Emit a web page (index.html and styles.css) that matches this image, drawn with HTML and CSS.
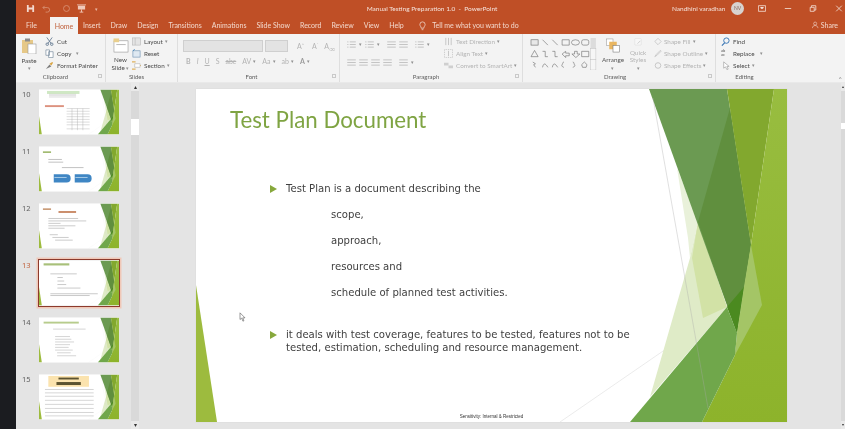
FILE: index.html
```html
<!DOCTYPE html>
<html lang="en">
<head>
    <meta charset="UTF-8">
    <title>Manual Testing Preparation 1.0 - PowerPoint</title>
    <link rel="stylesheet" href="styles.css">
</head>
<body>
    <svg class="defs" width="0" height="0">
        <defs>
            <symbol id="deco" viewBox="196 89 591 333" preserveAspectRatio="none">
                <linearGradient id="bright" x1="0" y1="0" x2="0" y2="1">
                    <stop offset="0" stop-color="#98bd40"/>
                    <stop offset="1" stop-color="#8db32b"/>
                </linearGradient>
                <polygon points="196,285 217,422 196,422" fill="#9dbb3e"/>
                <line x1="560" y1="422" x2="727" y2="307" stroke="#e6e6e6" stroke-width="0.8"/>
                <polygon points="677,168 698,222 690,258 688,238" fill="#e9f1da"/>
                <polygon points="698,222 727,307 650,397 690,258" fill="#dfebc7"/>
                <polygon points="698,222 727,307 703,318 692,258" fill="#d2e2a6"/>
                <polygon points="649,89 727,89 751,245 737,333" fill="#6b9a52"/>
                <polygon points="730,108 751,245 737,333 698,222" fill="#608f3e"/>
                <polygon points="727,307 744,287 737,333" fill="#4b8a20"/>
                <polygon points="727,89 774,89 751,245" fill="#82a82e"/>
                <polygon points="774,89 787,89 787,422 702,422 735,355 751,245" fill="url(#bright)"/>
                <polygon points="751,245 762,305 735,355 737,333 744,287" fill="#a4c566"/>
                <polygon points="727,307 737,333 735,355 702,422 630,422" fill="#70a74b"/>
                <line x1="653" y1="98" x2="708" y2="408" stroke="#a9a9a9" stroke-width="0.6" stroke-opacity="0.6"/>
            </symbol>
            <symbol id="lines" viewBox="0 0 10 8">
                <path d="M0 1h10M0 4h10M0 7h10" stroke="currentColor" stroke-width="1"/>
            </symbol>
            <symbol id="bullets" viewBox="0 0 10 8">
                <path d="M0 1h1.500M3 1h7M0 4h1.500M3 4h7M0 7h1.500M3 7h7" stroke="currentColor" stroke-width="1"/>
            </symbol>
        </defs>
    </svg>

    <div class="strip"></div>

    <div class="app">
        <header class="titlebar">
            <div class="qat">
                <svg class="qat-save" viewBox="0 0 10 10"><path d="M1 1h7l1 1v7H1z" fill="#f3d9cf"/><path d="M3 1h4v3H3zM3 6h4v3H3z" fill="#bf4f26"/></svg>
                <svg class="qat-undo" viewBox="0 0 10 10"><path d="M3 2L1 4l2 2M1 4h5a2.500 2.500 0 0 1 0 5H4" fill="none" stroke="#d88f72" stroke-width="1"/></svg>
                <svg class="qat-redo" viewBox="0 0 10 10"><circle cx="5" cy="5" r="3.300" fill="none" stroke="#d88f72" stroke-width="1"/></svg>
                <svg class="qat-show" viewBox="0 0 12 10"><path d="M1 0.500h10v1H1zM2 2h8v4H2z" fill="#f0c9ba"/><path d="M6 6v3M4 9h4" stroke="#f0c9ba"/></svg>
                <span class="qat-more">▾</span>
            </div>
            <div class="doc-title">Manual Testing Preparation 1.0 &nbsp;-&nbsp; PowerPoint</div>
            <div class="winbar">
                <span class="user">Nandhini varadhan</span>
                <span class="avatar">NV</span>
                <svg class="win-icon" viewBox="0 0 10 8"><path d="M0.500 0.500h9v7h-9z" fill="none" stroke="#f5e3db"/><path d="M3 2h4v1.500L5 5 3 3.500z" fill="#f5e3db"/></svg>
                <svg class="win-icon" viewBox="0 0 10 8"><path d="M1 4h8" stroke="#f5e3db"/></svg>
                <svg class="win-icon" viewBox="0 0 10 8"><path d="M1.500 2.500h5v5h-5zM3 2.500V0.500h5.500V6H6.500" fill="none" stroke="#f5e3db"/></svg>
                <svg class="win-icon" viewBox="0 0 10 8"><path d="M1.500 0.500l7 7M8.500 0.500l-7 7" stroke="#f5e3db"/></svg>
            </div>
        </header>

        <nav class="tabs">
            <span class="tab file">File</span>
            <span class="tab active">Home</span>
            <span class="tab">Insert</span>
            <span class="tab">Draw</span>
            <span class="tab">Design</span>
            <span class="tab">Transitions</span>
            <span class="tab">Animations</span>
            <span class="tab">Slide Show</span>
            <span class="tab">Record</span>
            <span class="tab">Review</span>
            <span class="tab">View</span>
            <span class="tab">Help</span>
            <svg class="bulb" viewBox="0 0 8 11"><path d="M2.500 8C2.500 6 1 5.500 1 3.800a3 3 0 0 1 6 0C7 5.500 5.500 6 5.500 8zM3 9.700h2" fill="none" stroke="#f7e6de" stroke-width="0.800"/></svg>
            <span class="tell">Tell me what you want to do</span>
            <span class="share">
                <svg viewBox="0 0 10 10"><circle cx="4.500" cy="3" r="2.200" fill="none" stroke="#f5e3db" stroke-width="0.800"/><path d="M0.500 9.500c0-5 8-5 8 0" fill="none" stroke="#f5e3db" stroke-width="0.800"/></svg>
                Share
            </span>
        </nav>

        <section class="ribbon">
            <div class="group g-clipboard">
                <div class="group-body">
                    <div class="big">
                        <svg class="big-icon" viewBox="0 0 16 16"><rect x="1" y="2" width="11" height="13" fill="#e6c887"/><rect x="4" y="0.500" width="5" height="3" fill="#8d8d8d"/><rect x="7" y="6" width="8" height="10" fill="#fff" stroke="#9a9a9a" stroke-width="0.600"/></svg>
                        <span>Paste</span>
                        <span class="caret">▾</span>
                    </div>
                    <div class="rows">
                        <div class="row"><svg class="ic" viewBox="0 0 10 10"><path d="M2 0.500l5 7M8 0.500l-5 7" stroke="#6a7f95" fill="none"/><circle cx="2.500" cy="8" r="1.400" fill="none" stroke="#6a7f95"/><circle cx="7.500" cy="8" r="1.400" fill="none" stroke="#6a7f95"/></svg>Cut</div>
                        <div class="row"><svg class="ic" viewBox="0 0 10 10"><path d="M1 1h4v6H1zM4 3h5v6.500H4z" fill="#fff" stroke="#6f8597" stroke-width="0.700"/></svg>Copy &nbsp;<span class="caret">▾</span></div>
                        <div class="row"><svg class="ic" viewBox="0 0 10 10"><path d="M5 3l3-2 1 1-2 3z" fill="#d9a441"/><path d="M1 9l4-5 2 2z" fill="#7d7d7d"/></svg>Format Painter</div>
                    </div>
                </div>
                <div class="group-label">Clipboard<i class="launcher"></i></div>
            </div>

            <div class="group g-slides">
                <div class="group-body">
                    <div class="big">
                        <svg class="big-icon" viewBox="0 0 16 16"><rect x="0.500" y="3" width="15" height="12" fill="#fff" stroke="#8f8f8f" stroke-width="0.600"/><rect x="0" y="0.500" width="6" height="4" fill="#e9cf8e"/><path d="M3 7h10" stroke="#b5b5b5"/></svg>
                        <span class="two-line">New<br>Slide <span class="caret">▾</span></span>
                    </div>
                    <div class="rows">
                        <div class="row"><svg class="ic" viewBox="0 0 10 10"><rect x="0.500" y="1" width="9" height="8" fill="#e4e4e4" stroke="#b2b2b2" stroke-width="0.600"/><path d="M3.500 1v8" stroke="#b2b2b2" stroke-width="0.600"/></svg>Layout <span class="caret">▾</span></div>
                        <div class="row"><svg class="ic" viewBox="0 0 10 10"><rect x="1" y="2" width="8" height="7" fill="#dfe9f2" stroke="#6f93b3" stroke-width="0.700"/><path d="M1 2l2-1.500" stroke="#3f7fb5"/></svg>Reset</div>
                        <div class="row"><svg class="ic" viewBox="0 0 10 10"><path d="M0 1h4M6 5h4M0 9h4" stroke="#e0b35f" stroke-width="1.200"/><path d="M3 3h6v4H3z" fill="#fff" stroke="#a9a9a9" stroke-width="0.600"/></svg>Section <span class="caret">▾</span></div>
                    </div>
                </div>
                <div class="group-label">Slides</div>
            </div>

            <div class="group g-font off">
                <div class="group-body stacked">
                    <div class="line">
                        <span class="select s-name"></span>
                        <span class="select s-size"></span>
                        <span class="glyph g1">A<sup>^</sup></span>
                        <span class="glyph g1">A<sup>ˇ</sup></span>
                        <span class="glyph g1">A<sub>⌫</sub></span>
                    </div>
                    <div class="line font-marks">
                        <b>B</b><i>I</i><u>U</u><span>S</span><s>abc</s><span>AV</span><span class="caret">▾</span><span>Aa</span><span class="caret">▾</span><span class="mark-pen">ab</span><span class="caret">▾</span><span class="mark-a">A</span><span class="caret">▾</span>
                    </div>
                </div>
                <div class="group-label">Font<i class="launcher"></i></div>
            </div>

            <div class="group g-para off">
                <div class="group-body">
                    <div class="para-icons">
                        <div class="line">
                            <svg class="pi" viewBox="0 0 10 8"><use href="#bullets"/></svg><span class="caret">▾</span>
                            <svg class="pi" viewBox="0 0 10 8"><use href="#bullets"/></svg><span class="caret">▾</span>
                            <svg class="pi sep" viewBox="0 0 10 8"><use href="#lines"/></svg>
                            <svg class="pi" viewBox="0 0 10 8"><use href="#lines"/></svg>
                            <svg class="pi sep" viewBox="0 0 10 8"><use href="#bullets"/></svg><span class="caret">▾</span>
                        </div>
                        <div class="line">
                            <svg class="pi" viewBox="0 0 10 8"><use href="#lines"/></svg>
                            <svg class="pi" viewBox="0 0 10 8"><use href="#lines"/></svg>
                            <svg class="pi" viewBox="0 0 10 8"><use href="#lines"/></svg>
                            <svg class="pi" viewBox="0 0 10 8"><use href="#lines"/></svg>
                            <svg class="pi sep" viewBox="0 0 10 8"><use href="#lines"/></svg><span class="caret">▾</span>
                        </div>
                    </div>
                    <div class="rows">
                        <div class="row"><svg class="ic" viewBox="0 0 10 10"><path d="M2 1v8M5 1v8M8 1v8" stroke="#c2c2c2"/></svg>Text Direction <span class="caret">▾</span></div>
                        <div class="row"><svg class="ic" viewBox="0 0 10 10"><rect x="0.500" y="0.500" width="9" height="9" fill="none" stroke="#c2c2c2" stroke-dasharray="1 1"/><path d="M5 2v6" stroke="#c2c2c2"/></svg>Align Text <span class="caret">▾</span></div>
                        <div class="row"><svg class="ic" viewBox="0 0 10 10"><path d="M0 2h5v3H0zM5 5h5v3H5z" fill="#cfcfcf"/></svg>Convert to SmartArt <span class="caret">▾</span></div>
                    </div>
                </div>
                <div class="group-label">Paragraph<i class="launcher"></i></div>
            </div>

            <div class="group g-draw">
                <div class="group-body">
                    <svg class="shapes" viewBox="0 0 74 36">
                        <g fill="none" stroke="#6d6d6d" stroke-width="0.700">
                            <rect x="1" y="2" width="8" height="6" fill="#e8e8e8"/>
                            <path d="M14 2l6 6M25 2l6 6M36 2h8v6h-8z"/>
                            <ellipse cx="51" cy="5" rx="4.500" ry="3"/>
                            <rect x="58" y="2" width="8" height="6" rx="2"/>
                            <path d="M5 14l4 7H1zM14 15h3v6h3M25 15h3v6h3"/>
                            <path d="M36 18l4-3v2h4v3h-4v2zM47 18h3v-3h3v3h3l-4.500 4zM58 15h8v6h-8z"/>
                            <path d="M3 27l3 2-2 1 2 3M14 33c1-5 3-5 6 0M25 33c1-5 3-5 6 0M38 27c-2 0-1 3-2 3s0 3 2 3M48 27c2 0 1 3 2 3s0 3-2 3M58 30l3-3 3 3-1 3h-4z"/>
                        </g>
                        <rect x="68" y="0" width="6" height="12" fill="#dcdcdc"/>
                        <rect x="68" y="12" width="6" height="12" fill="#f6f6f6" stroke="#bdbdbd" stroke-width="0.500"/>
                        <rect x="68" y="24" width="6" height="12" fill="#f6f6f6" stroke="#bdbdbd" stroke-width="0.500"/>
                    </svg>
                    <div class="big arrange">
                        <svg class="big-icon" viewBox="0 0 16 16"><rect x="1" y="1" width="7" height="7" fill="#fff" stroke="#9a9a9a" stroke-width="0.600"/><rect x="4" y="4" width="8" height="8" fill="#e9b661"/><rect x="8" y="8" width="7" height="7" fill="#fff" stroke="#777" stroke-width="0.600"/></svg>
                        <span class="two-line">Arrange<br><span class="caret">▾</span></span>
                    </div>
                    <div class="big quick off">
                        <svg class="big-icon" viewBox="0 0 16 16"><rect x="1" y="1" width="14" height="14" rx="2" fill="#f7f7f7" stroke="#cfcfcf" stroke-width="0.700"/><path d="M7 12l6-6" stroke="#bdbdbd" stroke-width="1.500"/></svg>
                        <span class="two-line">Quick<br>Styles <span class="caret">▾</span></span>
                    </div>
                    <div class="rows off">
                        <div class="row"><svg class="ic" viewBox="0 0 10 10"><path d="M1 5l4-4 4 4-4 4z" fill="none" stroke="#c4c4c4"/></svg>Shape Fill <span class="caret">▾</span></div>
                        <div class="row"><svg class="ic" viewBox="0 0 10 10"><path d="M1 9l2-3 5-5 1 1-5 5z" fill="none" stroke="#c4c4c4"/></svg>Shape Outline <span class="caret">▾</span></div>
                        <div class="row"><svg class="ic" viewBox="0 0 10 10"><circle cx="5" cy="5" r="3.500" fill="none" stroke="#bdbdbd"/></svg>Shape Effects <span class="caret">▾</span></div>
                    </div>
                </div>
                <div class="group-label">Drawing<i class="launcher"></i></div>
            </div>

            <div class="group g-edit">
                <div class="group-body">
                    <div class="rows">
                        <div class="row"><svg class="ic" viewBox="0 0 10 10"><circle cx="6" cy="4" r="3" fill="none" stroke="#2f6fb0"/><path d="M4 6.500L1 9.500" stroke="#2f6fb0" stroke-width="1.200"/></svg>Find</div>
                        <div class="row"><span class="ab">ab<br>ac</span>Replace &nbsp;<span class="caret">▾</span></div>
                        <div class="row"><svg class="ic" viewBox="0 0 10 10"><path d="M3 1v7l2-1.500L6.500 9.500 8 9 6.500 6H9z" fill="#fff" stroke="#8a8a8a" stroke-width="0.600"/></svg>Select <span class="caret">▾</span></div>
                    </div>
                </div>
                <div class="group-label">Editing</div>
            </div>
            <div class="collapse">^</div>
        </section>

        <main class="workspace">
            <aside class="thumbs">
                <div class="thumb-list">
                    <div class="thumb"><span class="num">10</span><svg class="mini" viewBox="196 89 591 333"><rect x="196" y="89" width="591" height="333" fill="#fff"/><use href="#deco" x="196" y="89" width="591" height="333"/><rect x="255" y="100" width="240" height="22" fill="#cfe8c4"/><path d="M270 125h200M270 135h200M270 145h200" stroke="#b0b0b0" stroke-width="3"/><rect x="240" y="205" width="140" height="14" fill="#c9583a" opacity=".65"/><path d="M400 230h170M400 250h170M400 270h170M400 290h170M400 310h170M400 330h170M400 350h170M400 380h170M440 230v160M480 230v160M520 230v160" stroke="#a9a9a9" stroke-width="3"/></svg></div>
                    <div class="thumb"><span class="num">11</span><svg class="mini" viewBox="196 89 591 333"><rect x="196" y="89" width="591" height="333" fill="#fff"/><use href="#deco" x="196" y="89" width="591" height="333"/><rect x="225" y="125" width="60" height="12" fill="#9fb96c"/><path d="M265 185h100M265 205h110M365 245h160" stroke="#a5a5a5" stroke-width="5"/><path d="M305 295h95a30 30 0 0 1 0 60h-95zM460 295h95a30 30 0 0 1 0 60h-95z" fill="#3f86c4"/><path d="M310 318h90M465 318h90" stroke="#dcecf8" stroke-width="5"/></svg></div>
                    <div class="thumb"><span class="num">12</span><svg class="mini" viewBox="196 89 591 333"><rect x="196" y="89" width="591" height="333" fill="#fff"/><use href="#deco" x="196" y="89" width="591" height="333"/><rect x="225" y="125" width="60" height="12" fill="#c99a76"/><rect x="340" y="145" width="130" height="14" fill="#c98a67"/><path d="M265 200h220M265 218h280M265 236h90M265 254h200M265 272h120M275 320h60M295 340h120M315 360h130" stroke="#a0a0a0" stroke-width="4"/></svg></div>
                    <div class="thumb current"><span class="num">13</span><svg class="mini" viewBox="196 89 591 333"><rect x="196" y="89" width="591" height="333" fill="#fff"/><use href="#deco" x="196" y="89" width="591" height="333"/><rect x="230" y="110" width="190" height="16" fill="#a8c07a"/><path d="M280 188h195M332 215h40M332 241h50M332 267h65M332 293h170M280 335h350M280 348h290" stroke="#9b9b9b" stroke-width="4"/></svg></div>
                    <div class="thumb"><span class="num">14</span><svg class="mini" viewBox="196 89 591 333"><rect x="196" y="89" width="591" height="333" fill="#fff"/><use href="#deco" x="196" y="89" width="591" height="333"/><rect x="230" y="120" width="260" height="14" fill="#b7cc8c"/><path d="M300 175h240M315 230h110M315 250h120M315 270h140M315 290h110M315 310h100M315 330h130M330 350h100M330 372h140" stroke="#b0b0b0" stroke-width="4"/></svg></div>
                    <div class="thumb"><span class="num">15</span><svg class="mini" viewBox="196 89 591 333"><rect x="196" y="89" width="591" height="333" fill="#fff"/><use href="#deco" x="196" y="89" width="591" height="333"/><rect x="265" y="100" width="300" height="80" fill="#fbe3ae"/><rect x="340" y="112" width="150" height="14" fill="#5c5330"/><rect x="325" y="145" width="180" height="22" fill="#5c5330"/><path d="M240 200h360M240 225h360M240 250h360M240 280h360M240 310h360M240 340h360M240 370h360M240 395h360" stroke="#b3b3b3" stroke-width="4"/></svg></div>
                </div>
                <div class="scroll left-scroll">
                    <span class="sbtn">▴</span>
                    <span class="sthumb"></span>
                    <span class="sbtn end">▾</span>
                </div>
            </aside>

            <div class="stage">
                <article class="slide">
                    <svg class="slide-art"><use href="#deco" width="100%" height="100%"/></svg>
                    <h1 class="slide-title">Test Plan Document</h1>
                    <ul class="points">
                        <li class="point">Test Plan is a document describing the</li>
                        <li class="sub">scope,</li>
                        <li class="sub">approach,</li>
                        <li class="sub">resources and</li>
                        <li class="sub">schedule of planned test activities.</li>
                        <li class="point second">it deals with test coverage, features to be tested, features not to be tested, estimation, scheduling and resource management.</li>
                    </ul>
                    <footer class="sensitivity">Sensitivity: Internal &amp; Restricted</footer>
                    <svg class="cursor" viewBox="0 0 8 12"><path d="M1 1v8l2-1.700L4.500 11l1.200-.5L4.300 7H7z" fill="#fff" stroke="#555" stroke-width="0.700"/></svg>
                </article>
            </div>

            <div class="scroll right-scroll">
                <span class="sbtn">▴</span>
                <span class="sthumb"></span>
                <span class="sbtn end">▾</span>
            </div>
        </main>
    </div>
</body>
</html>
```

FILE: styles.css
```css
* {
    box-sizing: border-box;
}
html, body {
    height: 100%;
}
body {
    margin: 0;
    display: flex;
    height: 429px;
    overflow: hidden;
    background-color: #1b1c20;
    font-family: Lato, "Open Sans", sans-serif;
    font-size: 7px;
    color: #4a4a4a;
}
.defs {
    position: absolute;
}
.strip {
    width: 16px;
    flex: none;
    background-color: #1b1c20;
}
.app {
    flex: 1;
    min-width: 0;
    display: flex;
    flex-direction: column;
    background-color: #e4e4e4;
    filter: blur(0.5px);
}

/* title bar */
.titlebar {
    height: 17px;
    flex: none;
    display: flex;
    align-items: center;
    background-color: #bf4f26;
    color: #f5e3db;
}
.qat {
    width: 296px;
    flex: none;
    display: flex;
    align-items: center;
    padding-left: 10px;
}
.qat svg {
    width: 9px;
    height: 9px;
}
.qat-undo {
    margin-left: 7px;
}
.qat-redo {
    margin-left: 11px;
}
.qat-show {
    margin-left: 5px;
    width: 11px !important;
}
.qat-more {
    margin-left: 8px;
    font-size: 5px;
    color: #e8b7a3;
}
.doc-title {
    width: 240px;
    flex: none;
    text-align: center;
    font-size: 6.500px;
    white-space: nowrap;
}
.winbar {
    flex: 1;
    display: flex;
    align-items: center;
    padding-left: 120px;
}
.user {
    width: 56px;
    font-size: 6.500px;
    white-space: nowrap;
}
.avatar {
    width: 13px;
    height: 13px;
    margin-left: 3px;
    border-radius: 50%;
    background-color: #d8d3d0;
    color: #8a6a5d;
    font-size: 5px;
    line-height: 13px;
    text-align: center;
}
.win-icon {
    width: 8px;
    height: 7px;
    margin-left: 17.500px;
}
.avatar + .win-icon {
    margin-left: 14px;
}

/* tabs */
.tabs {
    height: 17px;
    flex: none;
    display: flex;
    align-items: flex-end;
    padding-left: 10px;
    background-color: #bf4f26;
    color: #f3d8cc;
    font-size: 7px;
}
.tab {
    height: 17px;
    padding-top: 4px;
    margin-right: 10px;
    white-space: nowrap;
}
.tab.file {
    margin-right: 13px;
}
.tab.active {
    width: 28px;
    padding-top: 5px;
    margin-right: 5px;
    text-align: center;
    background-color: #f3f3f3;
    color: #c0613c;
}
.bulb {
    width: 7px;
    height: 10px;
    margin: 0 6px 3px 5.500px;
}
.tell {
    height: 17px;
    padding-top: 4px;
    white-space: nowrap;
}
.share {
    height: 17px;
    margin-left: auto;
    margin-right: 7px;
    padding-top: 4px;
    display: flex;
    gap: 2px;
    white-space: nowrap;
}
.share svg {
    width: 7px;
    height: 8px;
}

/* ribbon */
.ribbon {
    height: 49px;
    flex: none;
    display: flex;
    background-color: #f3f3f3;
    border-bottom: 1px solid #e9e9e9;
    font-size: 6.300px;
    position: relative;
}
.group {
    display: flex;
    flex-direction: column;
    border-right: 1px solid #dedede;
}
.g-clipboard { width: 90px; }
.g-slides { width: 72px; }
.g-font { width: 162px; }
.g-para { width: 183px; }
.g-draw { width: 193px; }
.g-edit { width: 57px; border-right: none; }
.group-body {
    height: 38px;
    flex: none;
    display: flex;
    gap: 5px;
    padding: 0 3px;
}
.group-body.stacked {
    flex-direction: column;
    gap: 3px;
    padding-top: 6px;
    padding-left: 5px;
}
.group-label {
    height: 10px;
    position: relative;
    text-align: center;
    font-size: 6px;
    line-height: 9px;
    color: #5c5c5c;
}
.g-clipboard .group-label,
.g-slides .group-label,
.g-para .group-label {
    padding-right: 10px;
}
.g-font .group-label {
    padding-right: 14px;
}
.g-draw .group-label {
    padding-right: 8px;
}
.launcher {
    position: absolute;
    right: 3px;
    top: 2px;
    width: 4px;
    height: 4px;
    border: 1px solid #c9c9c9;
}
.big {
    display: flex;
    flex-direction: column;
    align-items: center;
    padding-top: 2px;
    line-height: 7.500px;
    text-align: center;
}
.big-icon {
    width: 16px;
    height: 16px;
    margin: 2px 0 3px;
}
.two-line {
    display: block;
}
.caret {
    font-size: 4.500px;
    color: #8f8f8f;
}
.rows {
    display: flex;
    flex-direction: column;
    padding-top: 1px;
}
.row {
    height: 12.500px;
    display: flex;
    align-items: center;
    gap: 2px;
    white-space: nowrap;
}
.ic {
    width: 9px;
    height: 9px;
    flex: none;
    margin-right: 1px;
}
.g-clipboard .big { width: 20px; margin-right: 1px; }
.g-slides .big { width: 21px; margin-left: 1px; }
.g-slides .group-body { gap: 1px; }
.off, .off .row {
    color: #b4b4b4;
}
.off .group-label {
    color: #5c5c5c;
}
.line {
    display: flex;
    align-items: center;
    gap: 2px;
}
.select {
    height: 12px;
    background-color: #e3e3e3;
    border: 1px solid #cfcfcf;
}
.s-name { width: 83px; }
.s-size { width: 24px; margin-right: 4px; }
.glyph {
    width: 13px;
    font-size: 7px;
    line-height: 10px;
    text-align: center;
}
.glyph sup, .glyph sub {
    font-size: 4px;
    line-height: 0;
}
.font-marks {
    gap: 6px;
    height: 12px;
    padding-left: 3px;
    font-size: 7px;
}
.font-marks .caret {
    margin-left: -4px;
}
.mark-a {
    color: #9a9a9a;
    font-weight: bold;
}
.para-icons {
    width: 96px;
    display: flex;
    flex-direction: column;
    gap: 6px;
    padding-top: 4px;
    padding-left: 4px;
}
.para-icons .line {
    height: 12px;
    gap: 3px;
}
.pi {
    width: 9px;
    height: 7px;
    color: #bdbdbd;
}
.pi.sep {
    margin-left: 4px;
}
.g-draw .group-body {
    gap: 0;
    padding-left: 3px;
}
.shapes {
    width: 74px;
    height: 32px;
    margin-top: 4px;
    flex: none;
}
.arrange { width: 24px; margin-left: 1px; color: #555; }
.quick { width: 20px; margin-left: 3px; margin-right: 6px; }
.g-draw .rows .ic { width: 8px; margin-right: 0; }
.g-edit .row { color: #4a4a4a; }
.g-edit .group-body { padding-left: 5px; }
.ab {
    width: 10px;
    font-size: 4px;
    line-height: 4px;
    color: #555;
}
.collapse {
    position: absolute;
    right: 3px;
    bottom: 0;
    font-size: 6px;
    color: #8a8a8a;
}

/* workspace */
.workspace {
    flex: 1;
    min-height: 0;
    display: flex;
}
.thumbs {
    width: 123px;
    flex: none;
    display: flex;
}
.thumb-list {
    width: 115px;
    flex: none;
    display: flex;
    flex-direction: column;
    gap: 11px;
    padding-top: 6px;
    padding-left: 6px;
}
.thumb {
    display: flex;
    gap: 9px;
    height: 46px;
}
.num {
    width: 8px;
    font-family: "Noto Sans", sans-serif;
    font-size: 7.500px;
    line-height: 11px;
    color: #606060;
}
.mini {
    width: 80px;
    height: 46px;
    flex: none;
}
.current .num {
    color: #c0613c;
}
.current .mini {
    outline: 1.500px solid #8c3a2c;
    box-shadow: 0 0 0 2.500px #f0c8b8;
}
.scroll {
    display: flex;
    flex-direction: column;
    align-items: center;
    background-color: #d9d9d9;
}
.left-scroll {
    width: 8px;
    flex: none;
}
.right-scroll {
    width: 4px;
    flex: none;
}
.sbtn {
    height: 8px;
    width: 100%;
    font-size: 6px;
    line-height: 8px;
    text-align: center;
    background-color: #e9e9e9;
    color: #333;
    overflow: hidden;
}
.sbtn.end {
    margin-top: auto;
}
.sthumb {
    width: 100%;
    height: 16px;
    margin-top: 28px;
    background-color: #fff;
}
.right-scroll .sthumb {
    height: 6px;
    margin-top: 32px;
}
.right-scroll .sbtn {
    font-size: 4px;
}

/* slide */
.stage {
    flex: 1;
    min-width: 0;
    padding: 6px 0 0 57px;
}
.slide {
    width: 591px;
    height: 333px;
    position: relative;
    background-color: #fff;
    color: #404040;
    font-family: "DejaVu Sans", sans-serif;
    padding: 16px 0 0 34px;
    box-shadow: 0 0 1px #cfcfcf;
}
.slide-art {
    position: absolute;
    left: 0;
    top: 0;
    width: 100%;
    height: 100%;
}
.slide-title {
    position: relative;
    margin: 0;
    font-family: Lato, "Open Sans", sans-serif;
    font-size: 22.300px;
    line-height: 30px;
    font-weight: 400;
    color: #7fa443;
}
.points {
    position: relative;
    list-style: none;
    width: 352px;
    margin: 47px 0 0 56px;
    padding: 0;
    font-size: 10.100px;
    line-height: 13px;
}
.point {
    position: relative;
    padding-bottom: 13px;
}
.point::before {
    content: "";
    position: absolute;
    left: -16px;
    top: 2.500px;
    border-left: 7px solid #87a83c;
    border-top: 4px solid transparent;
    border-bottom: 4px solid transparent;
}
.sub {
    margin-left: 45px;
    padding-bottom: 13px;
}
.point.second {
    margin-top: 16px;
}
.sensitivity {
    position: absolute;
    left: 0;
    right: 0;
    bottom: 2px;
    text-align: center;
    font-family: "Liberation Sans", sans-serif;
    font-size: 4.500px;
    line-height: 6px;
    color: #333;
}
.cursor {
    position: absolute;
    left: 43px;
    top: 223px;
    width: 7px;
    height: 10px;
}
```
